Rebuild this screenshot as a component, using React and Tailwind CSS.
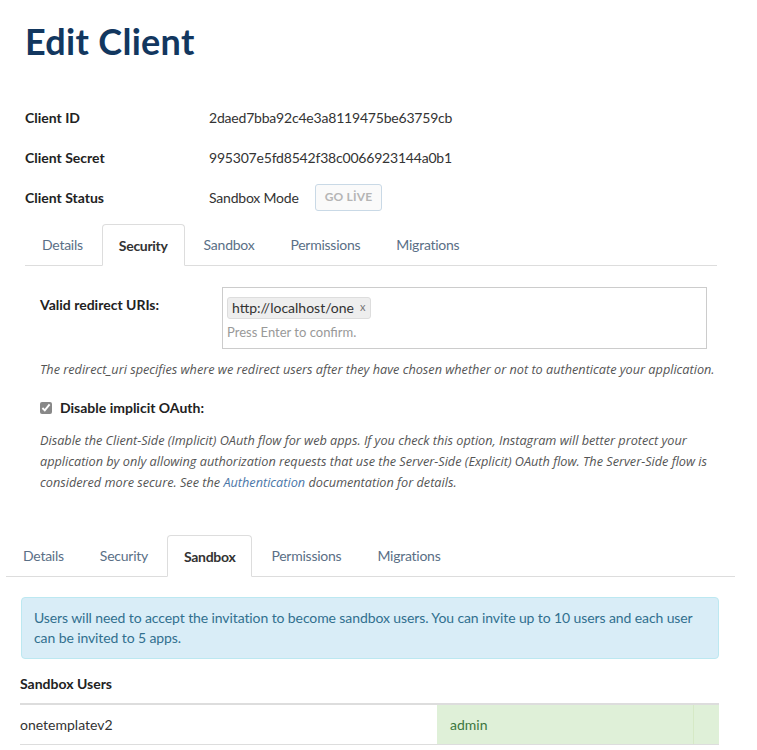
import React from "react";

const font = { fontFamily: "Lato, 'Open Sans', sans-serif" };
const italicFont = { fontFamily: "'Open Sans', Lato, sans-serif" };

const TABS = ["Details", "Security", "Sandbox", "Permissions", "Migrations"];

const Tabs = ({ active, className }) => (
  <div className={"flex items-end border-b border-[#dddddd] " + className}>
    {TABS.map((t) =>
      t === active ? (
        <div
          key={t}
          className="mr-[2px] -mb-px h-[42px] px-[16px] flex items-center border border-[#dddddd] border-b-white bg-white rounded-t-[4px] text-[14px] tracking-[-0.3px] font-bold text-[#333]"
        >
          {t}
        </div>
      ) : (
        <div
          key={t}
          className="mr-[2px] h-[41px] px-[16px] flex items-center border border-transparent text-[14px] tracking-[-0.25px] text-[#5a6f86]"
        >
          {t}
        </div>
      )
    )}
  </div>
);

const InfoRow = ({ label, children }) => (
  <div className="flex items-center h-[40px]">
    <div className="w-[184px] text-[14px] font-bold text-[#222]">{label}</div>
    <div className="flex items-center gap-[16px] text-[14px] tracking-[-0.2px] text-[#333]">{children}</div>
  </div>
);

export default function App() {
  return (
    <div style={font} className="bg-white w-[757px] min-h-[750px] overflow-hidden">
      {/* header + client info */}
      <div className="px-[25px] pt-[19px]">
        <h1 className="text-[36px] leading-[44px] font-bold text-[#12375f] tracking-[0.3px]">
          Edit Client
        </h1>
        <div className="mt-[34px] w-[692px]">
          <InfoRow label="Client ID">2daed7bba92c4e3a8119475be63759cb</InfoRow>
          <InfoRow label="Client Secret">995307e5fd8542f38c0066923144a0b1</InfoRow>
          <InfoRow label="Client Status">
            <span>Sandbox Mode</span>
            <span className="h-[27px] px-[9px] flex items-center border border-[#c9d9e6] rounded-[3px] bg-[#fafafa] text-[12px] font-bold text-[#b5b5b5] tracking-[0.2px]">
              GO LİVE
            </span>
          </InfoRow>
          <Tabs active="Security" className="mt-[7px]" />

          {/* security tab content */}
          <div className="pl-[15px]">
            <div className="flex items-start mt-[21px]">
              <div className="w-[182px] shrink-0 pt-[7px] text-[14px] font-bold text-[#222]">
                Valid redirect URIs:
              </div>
              <div className="w-[485px] shrink-0 h-[62px] border border-[#cccccc] px-[4px] pt-[7px]">
                <span className="inline-flex items-center h-[22px] px-[4px] gap-[6px] bg-[#eeeeee] border border-[#dddddd] rounded-[3px] text-[14px] text-[#333]">
                  http://localhost/one
                  <span className="text-[11px] text-[#777]">x</span>
                </span>
                <div className="mt-[4px] text-[13px] text-[#999]">Press Enter to confirm.</div>
              </div>
            </div>
            <p style={italicFont} className="mt-[11px] text-[12.7px] italic text-[#555] whitespace-nowrap">
              The redirect_uri specifies where we redirect users after they have chosen whether or not to authenticate your application.
            </p>
            <label className="mt-[18px] flex items-center gap-[8px]">
              <input type="checkbox" defaultChecked className="w-[12px] h-[12px] accent-[#888]" />
              <span className="text-[14px] font-bold text-[#222]">Disable implicit OAuth:</span>
            </label>
            <p style={italicFont} className="mt-[12px] w-[677px] text-[12.7px] leading-[21px] italic text-[#555]">
              Disable the Client-Side (Implicit) OAuth flow for web apps. If you check this option, Instagram will better protect your application by only allowing authorization requests that use the Server-Side (Explicit) OAuth flow. The Server-Side flow is considered more secure. See the <a className="text-[#4a76a8]">Authentication</a> documentation for details.
            </p>
          </div>
        </div>
      </div>

      {/* sandbox tab */}
      <div className="ml-[6px] w-[729px] mt-[42px]">
        <Tabs active="Sandbox" />
        <div className="pl-[15px] pr-[16px]">
          <div className="mt-[20px] h-[62px] px-[12px] pt-[10px] bg-[#d9edf7] border border-[#bce8f1] rounded-[4px] text-[14px] leading-[20px] tracking-[-0.1px] text-[#31708f]">
            Users will need to accept the invitation to become sandbox users. You can invite up to 10 users and each user can be invited to 5 apps.
          </div>
          <div className="mt-[14px] text-[14px] font-bold text-[#222] -ml-[1px]">Sandbox Users</div>
          <div className="mt-[9px] -ml-[1px] flex h-[42px] border-t-2 border-b border-[#dddddd]">
            <div className="w-[417px] flex items-center text-[14px] text-[#333]">onetemplatev2</div>
            <div className="w-[256px] flex items-center pl-[13px] bg-[#dff0d8] text-[14px] text-[#3c763d]">admin</div>
            <div className="flex-1 bg-[#dff0d8] border-l border-[#d6e9c6]" />
          </div>
        </div>
      </div>
    </div>
  );
}
